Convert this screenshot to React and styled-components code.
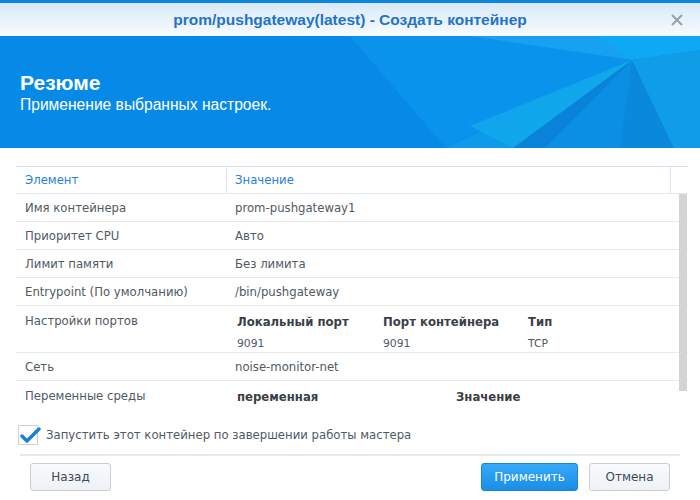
import React from 'react';
import styled, { createGlobalStyle } from 'styled-components';

const Global = createGlobalStyle`
  html, body {
    margin: 0;
    padding: 0;
    background: #ffffff;
  }
  * {
    box-sizing: border-box;
  }
`;

const Window = styled.div`
  width: 700px;
  height: 500px;
  overflow: hidden;
  display: flex;
  flex-direction: column;
  background: #fff;
  border-top: 3px solid #0a86de;
  font-family: "DejaVu Sans", Verdana, sans-serif;
`;

const TitleBar = styled.div`
  height: 33px;
  flex: none;
  display: flex;
  align-items: center;
  justify-content: center;
  position: relative;
  background: linear-gradient(#d9e9f8, #f7fbfe);
  color: #1f74c8;
  font-family: "Liberation Sans", Arial, sans-serif;
  font-weight: bold;
  font-size: 15.5px;
`;

const Close = styled.button`
  position: absolute;
  right: 16px;
  top: 10px;
  width: 14px;
  height: 14px;
  padding: 0;
  border: none;
  background: none;
  display: flex;
`;

const Banner = styled.div`
  height: 112px;
  flex: none;
  position: relative;
  overflow: hidden;
  background: #0a8fe9;
  color: #fff;
  padding: 35px 20px 0;
  font-family: "Liberation Sans", Arial, sans-serif;

  svg {
    position: absolute;
    left: 0;
    top: 0;
  }
`;

const BannerText = styled.div`
  position: relative;
  display: flex;
  flex-direction: column;
`;

const Heading = styled.div`
  font-size: 21px;
  line-height: 24px;
  font-weight: bold;
`;

const Sub = styled.div`
  font-size: 15.6px;
  line-height: 19px;
`;

const Content = styled.div`
  flex: 1;
  display: flex;
  flex-direction: column;
  padding: 18px 12px 0 16px;
  font-size: 11.7px;
`;

const Table = styled.div`
  border-top: 1px solid #d3e0ee;
  display: flex;
  flex-direction: column;
`;

const HeadRow = styled.div`
  display: grid;
  grid-template-columns: 211px 444px 17px;
  height: 27px;
  border-bottom: 1px solid #e4e8ec;
`;

const HeadCell = styled.div`
  display: flex;
  align-items: center;
  padding-left: ${({ $first }) => ($first ? '9px' : '8px')};
  color: #2a80d6;
  border-right: ${({ $divider }) => ($divider ? '1px solid #dde6f0' : 'none')};
`;

const Viewport = styled.div`
  height: 211px;
  overflow: hidden;
  position: relative;
`;

const Thumb = styled.div`
  position: absolute;
  right: 1px;
  top: 0;
  width: 8px;
  height: 197px;
  background: #d4d4d6;
`;

const Row = styled.div`
  display: grid;
  grid-template-columns: 211px 1fr;
  height: ${({ $h }) => $h || 28}px;
  flex: none;
  border-bottom: 1px solid #e8eaec;
  color: #505a64;
`;

const Cell = styled.div`
  display: flex;
  white-space: nowrap;
  align-items: ${({ $top }) => ($top ? 'flex-start' : 'center')};
  padding-top: ${({ $top }) => ($top ? '8px' : '0')};
  padding-left: ${({ $value }) => ($value ? '8px' : '9px')};
`;

const SubTable = styled.div`
  display: grid;
  grid-template-columns: ${({ $cols }) => $cols};
  align-content: start;
  padding: 9px 0 0 10px;
  row-gap: 8px;
  white-space: nowrap;
`;

const SubHead = styled.div`
  font-weight: bold;
  color: #3a3f45;
`;

const SubVal = styled.div`
  font-size: 10.8px;
  color: #505a64;
`;

const CheckRow = styled.label`
  display: flex;
  align-items: center;
  gap: 8px;
  margin-top: 19px;
  padding-left: 2px;
  color: #505a64;
  height: 22px;
`;

const Box = styled.span`
  width: 20px;
  height: 20px;
  border: 1px solid #c9d0d8;
  background: #fff;
  position: relative;
  display: flex;

  svg {
    position: absolute;
    left: 1px;
    top: 1px;
  }
`;

const Footer = styled.div`
  margin: 8px 8px 0 4px;
  border-top: 2px solid #e6e8eb;
  padding: 7px 10px 0 10px;
  display: flex;
  gap: 11px;
`;

const Btn = styled.button`
  height: 28px;
  min-width: ${({ $w }) => $w}px;
  border-radius: 3px;
  font-family: "DejaVu Sans", Verdana, sans-serif;
  font-size: 12px;
  cursor: pointer;
  border: 1px solid ${({ $primary }) => ($primary ? '#1b84d6' : '#c6cfd8')};
  color: ${({ $primary }) => ($primary ? '#fff' : '#3f4a55')};
  background: ${({ $primary }) =>
    $primary
      ? 'linear-gradient(#36a9f9, #1a8de6)'
      : 'linear-gradient(#f8fafc, #eef2f6)'};
  margin-left: ${({ $push }) => ($push ? 'auto' : '0')};
`;

const rows = [
  ['Имя контейнера', 'prom-pushgateway1'],
  ['Приоритет CPU', 'Авто'],
  ['Лимит памяти', 'Без лимита'],
  ['Entrypoint (По умолчанию)', '/bin/pushgateway'],
];

const BannerArt = () => (
  <svg width="700" height="112" viewBox="0 0 700 112">
    <polygon points="0,0 350,0 446,112 0,112" fill="#078ae7" />
    <polygon points="350,0 470,0 632,24 520,70 446,112" fill="#0a93ec" />
    <polygon points="470,0 700,0 632,24" fill="#16a2f1" />
    <polygon points="600,0 700,0 700,14 632,24" fill="#0fa8f4" />
    <polygon points="632,24 446,112 513,112" fill="#0d9aea" />
    <polygon points="632,24 470,90 513,112 540,100" fill="#12aaed" opacity="0.8" />
    <polygon points="632,24 513,112 545,112" fill="#0883d9" />
    <polygon points="632,24 545,112 620,112" fill="#0b8fe2" />
    <polygon points="632,24 620,112 674,112" fill="#0a88dc" />
    <polygon points="632,24 700,14 700,112 674,112" fill="#109de8" />
  </svg>
);

export default function App() {
  return (
    <>
      <Global />
      <Window>
        <TitleBar>
          prom/pushgateway(latest) - Создать контейнер
          <Close aria-label="close">
            <svg width="14" height="14" viewBox="0 0 14 14">
              <path d="M2 2 L12 12 M12 2 L2 12" stroke="#9aa0a8" strokeWidth="2" />
            </svg>
          </Close>
        </TitleBar>
        <Banner>
          <BannerArt />
          <BannerText>
            <Heading>Резюме</Heading>
            <Sub>Применение выбранных настроек.</Sub>
          </BannerText>
        </Banner>
        <Content>
          <Table>
            <HeadRow>
              <HeadCell $first $divider>Элемент</HeadCell>
              <HeadCell $divider>Значение</HeadCell>
              <HeadCell />
            </HeadRow>
            <Viewport>
              {rows.map(([k, v]) => (
                <Row key={k}>
                  <Cell>{k}</Cell>
                  <Cell $value>{v}</Cell>
                </Row>
              ))}
              <Row $h={47}>
                <Cell $top>Настройки портов</Cell>
                <SubTable $cols="146px 145px 1fr">
                  <SubHead>Локальный порт</SubHead>
                  <SubHead>Порт контейнера</SubHead>
                  <SubHead>Тип</SubHead>
                  <SubVal>9091</SubVal>
                  <SubVal>9091</SubVal>
                  <SubVal>TCP</SubVal>
                </SubTable>
              </Row>
              <Row>
                <Cell>Сеть</Cell>
                <Cell $value>noise-monitor-net</Cell>
              </Row>
              <Row $h={60}>
                <Cell $top>Переменные среды</Cell>
                <SubTable $cols="219px 1fr">
                  <SubHead>переменная</SubHead>
                  <SubHead>Значение</SubHead>
                </SubTable>
              </Row>
              <Thumb />
            </Viewport>
          </Table>
          <CheckRow>
            <Box>
              <svg width="22" height="18" viewBox="0 0 22 18">
                <path d="M2 9 L7 14 L19 2" stroke="#1a7fd8" strokeWidth="3.4" fill="none" strokeLinecap="round" strokeLinejoin="round" />
              </svg>
            </Box>
            Запустить этот контейнер по завершении работы мастера
          </CheckRow>
          <Footer>
            <Btn $w={81}>Назад</Btn>
            <Btn $w={97} $primary $push>Применить</Btn>
            <Btn $w={81}>Отмена</Btn>
          </Footer>
        </Content>
      </Window>
    </>
  );
}
